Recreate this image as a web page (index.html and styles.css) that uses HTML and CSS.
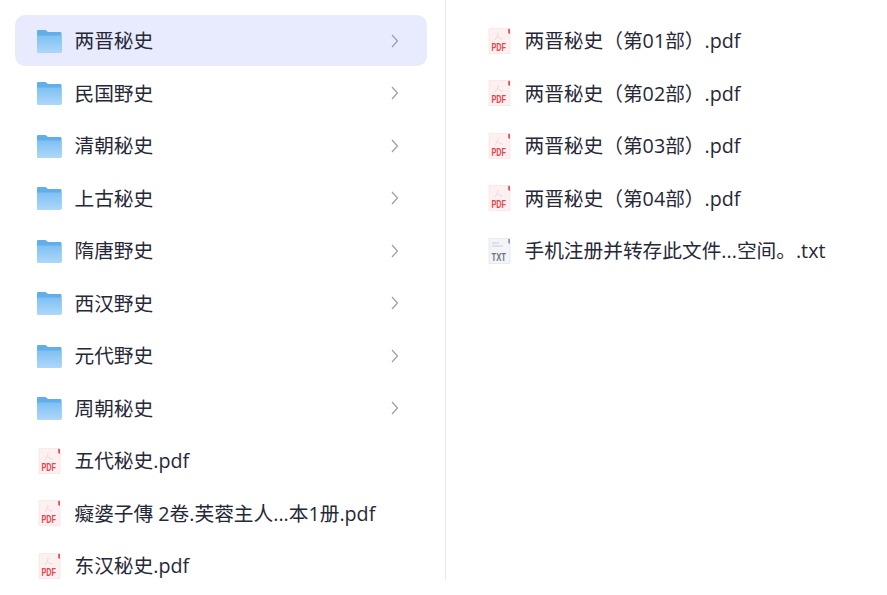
FILE: index.html
```html
<!DOCTYPE html>
<html lang="zh-CN">
<head>
<meta charset="utf-8">
<title>文件列表</title>
<link rel="stylesheet" href="styles.css">
</head>
<body>
<svg class="defs" width="0" height="0" aria-hidden="true">
  <defs>
    <linearGradient id="fg" x1="0" y1="0" x2="0" y2="1">
      <stop offset="0" stop-color="#7fc0f3"/>
      <stop offset="1" stop-color="#acd7f9"/>
    </linearGradient>
    <symbol id="folder" viewBox="0 0 26 24">
      <path d="M1 2.200Q1 1 2.200 1H9.500L12 3H24.200Q25.500 3 25.500 4.300V22.500Q25.500 23.500 24.500 23.500H2Q1 23.500 1 22.500Z" fill="#62aeea"/>
      <path d="M1 6.500H25.500V22.500Q25.500 23.500 24.500 23.500H2Q1 23.500 1 22.500Z" fill="url(#fg)"/>
    </symbol>
    <symbol id="pdf" viewBox="0 0 23 26">
      <path d="M1 .5H20L22 2.500V25.500H1Z" fill="#fdf0f0" stroke="#f8e4e4" stroke-width=".8"/>
      <path d="M20.200 .8H22V6L20.200 5Z" fill="#e4505a"/>
      <path d="M9.500 5.500C11 5 9.500 9 7 12M10 8.500C11 10 12.500 11 14.500 11" fill="none" stroke="#f0cfd0" stroke-width=".9"/>
      <text x="3.500" y="23" textLength="14.500" lengthAdjust="spacingAndGlyphs" class="pdf-mark">PDF</text>
    </symbol>
    <symbol id="txt" viewBox="0 0 23 26">
      <path d="M1 .5H20L22 2.500V25.500H1Z" fill="#f2f4f8" stroke="#e3e6ed" stroke-width=".8"/>
      <path d="M20.200 .8H22V6L20.200 5Z" fill="#8f97a8"/>
      <path d="M4 5H11M4 8H15" stroke="#c8ccd6" stroke-width="1"/>
      <text x="3.500" y="23" textLength="14.500" lengthAdjust="spacingAndGlyphs" class="txt-mark">TXT</text>
    </symbol>
    <symbol id="chev" viewBox="0 0 10 16">
      <path d="M2 2L7.500 8L2 14" fill="none" stroke="#9a9ea8" stroke-width="1.200"/>
    </symbol>
  </defs>
</svg>
<main class="columns">
  <ul class="list list-left">
    <li class="row is-selected"><svg class="ic-folder"><use href="#folder"/></svg><span class="name">两晋秘史</span><svg class="chev"><use href="#chev"/></svg></li>
    <li class="row"><svg class="ic-folder"><use href="#folder"/></svg><span class="name">民国野史</span><svg class="chev"><use href="#chev"/></svg></li>
    <li class="row"><svg class="ic-folder"><use href="#folder"/></svg><span class="name">清朝秘史</span><svg class="chev"><use href="#chev"/></svg></li>
    <li class="row"><svg class="ic-folder"><use href="#folder"/></svg><span class="name">上古秘史</span><svg class="chev"><use href="#chev"/></svg></li>
    <li class="row"><svg class="ic-folder"><use href="#folder"/></svg><span class="name">隋唐野史</span><svg class="chev"><use href="#chev"/></svg></li>
    <li class="row"><svg class="ic-folder"><use href="#folder"/></svg><span class="name">西汉野史</span><svg class="chev"><use href="#chev"/></svg></li>
    <li class="row"><svg class="ic-folder"><use href="#folder"/></svg><span class="name">元代野史</span><svg class="chev"><use href="#chev"/></svg></li>
    <li class="row"><svg class="ic-folder"><use href="#folder"/></svg><span class="name">周朝秘史</span><svg class="chev"><use href="#chev"/></svg></li>
    <li class="row"><svg class="ic-file"><use href="#pdf"/></svg><span class="name">五代秘史.pdf</span></li>
    <li class="row"><svg class="ic-file"><use href="#pdf"/></svg><span class="name">癡婆子傳 2卷.芙蓉主人...本1册.pdf</span></li>
    <li class="row"><svg class="ic-file"><use href="#pdf"/></svg><span class="name">东汉秘史.pdf</span></li>
  </ul>
  <ul class="list list-right">
    <li class="row"><svg class="ic-file"><use href="#pdf"/></svg><span class="name">两晋秘史（第01部）.pdf</span></li>
    <li class="row"><svg class="ic-file"><use href="#pdf"/></svg><span class="name">两晋秘史（第02部）.pdf</span></li>
    <li class="row"><svg class="ic-file"><use href="#pdf"/></svg><span class="name">两晋秘史（第03部）.pdf</span></li>
    <li class="row"><svg class="ic-file"><use href="#pdf"/></svg><span class="name">两晋秘史（第04部）.pdf</span></li>
    <li class="row"><svg class="ic-file"><use href="#txt"/></svg><span class="name">手机注册并转存此文件...空间。.txt</span></li>
  </ul>
</main>
</body>
</html>
```

FILE: styles.css
```css
* { box-sizing: border-box; }

html, body {
  margin: 0;
  height: 100%;
  background: #fff;
  overflow: hidden;
}

body {
  font-family: "Open Sans", "Noto Sans CJK SC", sans-serif;
  font-size: 19.700px;
  color: #262838;
}

.defs { display: block; height: 0; }

.columns {
  display: flex;
  align-items: flex-start;
  padding-left: 15px;
}

.list {
  margin: 0;
  padding: 15.300px 0 0;
  list-style: none;
  display: flex;
  flex-direction: column;
  gap: 1.500px;
  height: 580px;
}

.list-left {
  width: 431px;
  padding-right: 18.500px;
  border-right: 1px solid #e8e8ea;
}

.list-right {
  flex: 1;
  padding-left: 19px;
  padding-right: 20px;
}

.row {
  flex: none;
  display: flex;
  align-items: center;
  height: 51px;
  padding: 0 27px 0 22px;
  border-radius: 10px;
  white-space: nowrap;
}

.is-selected { background: #e7ebfd; }

.ic-folder {
  flex: none;
  width: 26px;
  height: 24px;
  margin-left: -1.500px;
  margin-right: 13px;
}

.ic-file {
  flex: none;
  width: 23px;
  height: 26px;
  margin-left: 1px;
  margin-right: 13.500px;
}

.name {
  flex: 1;
  line-height: 27px;
}

.chev {
  flex: none;
  width: 10px;
  height: 16px;
}

.pdf-mark, .txt-mark {
  font-family: "Liberation Sans", sans-serif;
  font-size: 11px;
  font-weight: 700;
}

.pdf-mark { fill: #e2454f; }
.txt-mark { fill: #6c7486; }
```
